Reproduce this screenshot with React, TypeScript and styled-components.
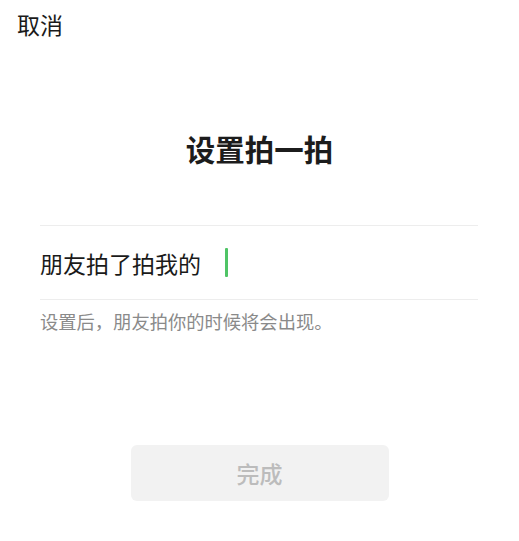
import styled, { createGlobalStyle } from "styled-components"

const GlobalStyle = createGlobalStyle`
    html, body {
        margin: 0;
        padding: 0;
        background: #ffffff;
    }

    body {
        font-family: "Noto Sans CJK SC", "Noto Sans", sans-serif;
        color: #1a1a1a;
    }
`

function App() {
    return (
        <Page>
            <GlobalStyle />
            <TopBar>
                <CancelButton>取消</CancelButton>
            </TopBar>

            <Title>设置拍一拍</Title>

            <Form>
                <InputRow>
                    <InputText>朋友拍了拍我的</InputText>
                    <Caret />
                </InputRow>
                <Hint>设置后，朋友拍你的时候将会出现。</Hint>
            </Form>

            <Footer>
                <DoneButton disabled>完成</DoneButton>
            </Footer>
        </Page>
    )
}

export default App

const Page = styled.div`
    width: 519px;
    height: 541px;
    display: flex;
    flex-direction: column;
    background: #ffffff;
    overflow: hidden;
`

const TopBar = styled.div`
    height: 50px;
    padding: 11px 0 0 17px;
    box-sizing: border-box;
`

const CancelButton = styled.span`
    font-size: 23px;
    line-height: 26px;
    color: #1a1a1a;
    cursor: pointer;
`

const Title = styled.h1`
    margin: 81px 0 0;
    font-size: 29.5px;
    line-height: 34px;
    font-weight: 700;
    text-align: center;
    color: #1c1c1c;
`

const Form = styled.div`
    margin: 60px 41px 0 40px;
    border-top: 1px solid #ededed;
`

const InputRow = styled.div`
    height: 73px;
    display: flex;
    align-items: center;
    gap: 24px;
    border-bottom: 1px solid #ededed;
`

const InputText = styled.span`
    font-size: 23px;
    line-height: 28px;
    color: #1a1a1a;
`

const Caret = styled.span`
    width: 3px;
    height: 29px;
    background: #4fc466;
    border-radius: 1px;
`

const Hint = styled.p`
    margin: 9px 0 0;
    font-size: 18.3px;
    line-height: 24px;
    color: #8a8a8a;
`

const Footer = styled.div`
    display: flex;
    justify-content: center;
    margin-top: 112px;
`

const DoneButton = styled.button`
    width: 258px;
    height: 56px;
    border: none;
    border-radius: 6px;
    background: #f2f2f2;
    color: #bcbcbc;
    font-family: "Noto Sans CJK SC", "Noto Sans", sans-serif;
    font-size: 23px;
    font-weight: 500;
`
